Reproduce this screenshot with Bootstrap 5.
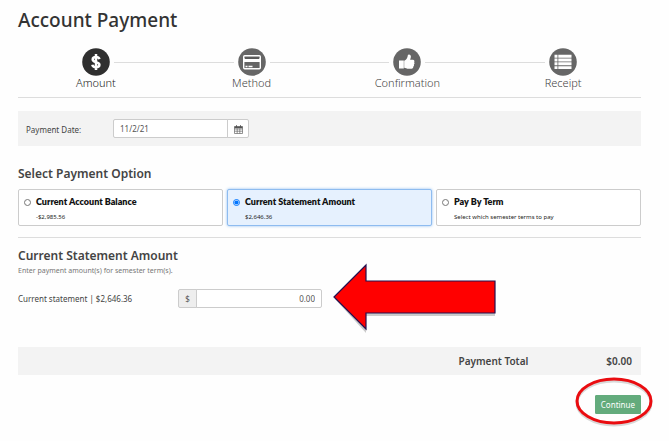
<!DOCTYPE html>
<html lang="en">
<head>
<meta charset="utf-8">
<meta name="viewport" content="width=device-width, initial-scale=1">
<title>Account Payment</title>
<link href="https://cdn.jsdelivr.net/npm/bootstrap@5.3.0/dist/css/bootstrap.min.css" rel="stylesheet">
<style>
body { font-family: "Noto Sans", "Open Sans", sans-serif; font-size: 8px; line-height: 12px; color: #444; background: #fefefe; }
.page { padding: 8px 28px 16px 18px; }
.page-title { font-size: 19px; line-height: 24px; font-weight: 500; color: #333; margin-bottom: 16px; }
.steps { border-bottom: 1px solid #ddd; padding-bottom: 7px; margin-bottom: 13px; }
.step { font-size: 11px; line-height: 14px; font-weight: 300; color: #444; }
.step-icon { width: 28px; height: 28px; }
.step-line { height: 1px; background: #ddd; }
.disc { fill: #666; }
.active .disc { fill: #2f2f2f; }
.active { color: #222; }
.date-bar { background: #f3f3f3; padding: 8px; margin-bottom: 20px; }
.date-label { width: 87px; padding-top: 2px; }
.date-group { width: 136px; }
.amount-label { width: 160px; }
.amount-group { width: 144px; }
.form-control, .input-group-text { font-size: 8px; line-height: 11px; padding: 3px 6px; border-radius: 2px; min-height: 0; border-color: #ccc; color: #555; }
.input-group-text { background: #eee; width: 19px; }
.cal-btn { background: #fff; border: 1px solid #ccc; border-radius: 2px; padding: 0; width: 22px; line-height: 11px; }
.cal-btn svg { width: 9px; height: 9px; }
.section-title { font-size: 12px; line-height: 16px; font-weight: 600; color: #444; margin: 0; }
.options { padding-top: 7px; padding-bottom: 11px; border-bottom: 1px solid #ddd; margin-bottom: 10px; }
.option { border: 1px solid #ccc; border-radius: 2px; background: #fff; padding: 6px 5px 2px; color: #222; font-size: 6px; }
.option.selected { background: #e6f1fe; border-color: #8ebcf0; box-shadow: 0 0 3px #8ebcf0; }
.option-radio { width: 7px; height: 7px; margin: 3px 5px 0 0; flex: none; }
.option-name { font-family: Lato, "Noto Sans", sans-serif; font-size: 9px; line-height: 12px; font-weight: 800; color: #111; margin-bottom: 3px; }
.hint { font-size: 7px; line-height: 10px; color: #777; margin: 2px 0 13px; }
.amount-row { margin-bottom: 39px; }
.arrow { left: 314px; top: -27px; width: 168px; height: 72px; }
.total-bar { background: #f3f3f3; padding: 6px 9px; font-size: 10px; line-height: 16px; font-weight: 600; margin-bottom: 20px; }
.total-name { margin-right: 78px; }
.continue-btn { background: #63ab7c; color: #fff; font-size: 8px; line-height: 11px; padding: 3px 5px; border-radius: 1px; border-color: #63ab7c; }
.ring { right: -14px; top: -20px; width: 82px; height: 54px; }
</style>
<script src="https://cdn.jsdelivr.net/npm/bootstrap@5.3.0/dist/js/bootstrap.bundle.min.js"></script>
</head>
<body>
<main class="page">
  <h1 class="page-title">Account Payment</h1>

  <div class="steps row g-0 text-center">
    <div class="step col active">
      <div class="d-flex align-items-center">
        <span class="flex-fill"></span>
        <svg class="step-icon mx-1" viewBox="0 0 28 28" aria-hidden="true"><circle class="disc" cx="14" cy="14" r="13.800"/><path d="M17.500 11.200C17 9.600 15.700 9 14 9c-2 0-3.300.9-3.300 2.400 0 3.600 6.700 1.800 6.700 5.300 0 1.600-1.500 2.500-3.500 2.500s-3.200-.8-3.600-2.500M14 6v16" fill="none" stroke="#fff" stroke-width="2.500"/></svg>
        <span class="step-line flex-fill"></span>
      </div>
      Amount
    </div>
    <div class="step col">
      <div class="d-flex align-items-center">
        <span class="step-line flex-fill"></span>
        <svg class="step-icon mx-1" viewBox="0 0 28 28" aria-hidden="true"><circle class="disc" cx="14" cy="14" r="13.800"/><rect x="5.700" y="7.700" width="16.600" height="13" rx="1" fill="none" stroke="#fff" stroke-width="1.400"/><path d="M6 10.500h16v3.500H6z" fill="#fff"/><path d="M7 10.200h14" stroke="#555" stroke-width="1.500"/><path d="M7.500 18.500h2M10.500 18.500h4" stroke="#fff" stroke-width="1.300"/></svg>
        <span class="step-line flex-fill"></span>
      </div>
      Method
    </div>
    <div class="step col">
      <div class="d-flex align-items-center">
        <span class="step-line flex-fill"></span>
        <svg class="step-icon mx-1" viewBox="0 0 28 28" aria-hidden="true"><circle class="disc" cx="14" cy="14" r="13.800"/><path d="M6 12.500h4.800v8H6zM11.200 12.700c2-.7 3-2.500 3.400-4.100.2-1.300.3-2.200 1.300-2.200 1.700 0 2.300 1.600 1.900 3.100l-.7 2.200h2.700c1.600 0 2.100 1.600 1.300 2.600.6.700.5 1.800-.2 2.300.3.900 0 1.600-.6 2 .2 1.200-.6 2.200-1.700 2.200h-3c-1.800 0-3-.7-4.400-1z" fill="#fff"/></svg>
        <span class="step-line flex-fill"></span>
      </div>
      Confirmation
    </div>
    <div class="step col">
      <div class="d-flex align-items-center">
        <span class="step-line flex-fill"></span>
        <svg class="step-icon mx-1" viewBox="0 0 28 28" aria-hidden="true"><circle class="disc" cx="14" cy="14" r="13.800"/><path d="M5.500 8.200h3M5.500 12h3M5.500 15.800h3M5.500 19.600h3M9.300 8.200h13.200M9.300 12h13.200M9.300 15.800h13.200M9.300 19.600h13.200" stroke="#fff" stroke-width="2.900"/></svg>
        <span class="flex-fill"></span>
      </div>
      Receipt
    </div>
  </div>

  <form>
    <div class="date-bar d-flex align-items-center">
      <label class="date-label" for="payDate">Payment Date:</label>
      <div class="date-group input-group">
        <input class="form-control" id="payDate" type="text" value="11/2/21">
        <button class="cal-btn" type="button" aria-label="Choose date"><svg viewBox="0 0 9 9" aria-hidden="true"><path d="M.5 1.500h8v7h-8zM.5 4h8M.5 6.200h8M3.200 3.500v5M5.800 3.500v5" fill="none" stroke="#666" stroke-width=".7"/><path d="M.5 1.500h8v1.800h-8zM2 .2h1v2H2zM6 .2h1v2H6z" fill="#555"/></svg></button>
      </div>
    </div>

    <h2 class="section-title">Select Payment Option</h2>
    <div class="options d-flex gap-1">
      <label class="option d-flex align-items-start col" for="optBalance">
        <input class="option-radio" type="radio" name="option" id="optBalance">
        <span><span class="option-name d-block">Current Account Balance</span>-$2,985.56</span>
      </label>
      <label class="option selected d-flex align-items-start col" for="optStatement">
        <input class="option-radio" type="radio" name="option" id="optStatement" checked>
        <span><span class="option-name d-block">Current Statement Amount</span>$2,646.36</span>
      </label>
      <label class="option d-flex align-items-start col" for="optTerm">
        <input class="option-radio" type="radio" name="option" id="optTerm">
        <span><span class="option-name d-block">Pay By Term</span>Select which semester terms to pay</span>
      </label>
    </div>

    <h2 class="section-title">Current Statement Amount</h2>
    <p class="hint">Enter payment amount(s) for semester term(s).</p>
    <div class="amount-row d-flex align-items-center position-relative">
      <label class="amount-label" for="amount">Current statement | $2,646.36</label>
      <div class="amount-group input-group">
        <span class="input-group-text justify-content-center">$</span>
        <input class="form-control text-end" id="amount" type="text" value="0.00">
      </div>
      <svg class="arrow position-absolute" viewBox="0 0 168 72" aria-hidden="true"><path d="M3 37 34 5v17h129v32H34v17z" fill="#000" opacity=".2"/><path d="M2 35 34 3v16h129v32H34v16z" fill="#f00" stroke="#24104f" stroke-width="1.200"/></svg>
    </div>

    <div class="total-bar d-flex justify-content-end">
      <span class="total-name">Payment Total</span><span>$0.00</span>
    </div>
    <div class="d-flex justify-content-end position-relative">
      <button class="continue-btn btn" type="submit">Continue</button>
      <svg class="ring position-absolute pe-none" viewBox="0 0 82 54" aria-hidden="true"><ellipse cx="41" cy="28" rx="37" ry="22" fill="none" stroke="#000" stroke-opacity=".15" stroke-width="3"/><ellipse cx="41" cy="26" rx="37" ry="22" fill="none" stroke="#ea0c10" stroke-width="3"/></svg>
    </div>
  </form>
</main>
</body>
</html>
